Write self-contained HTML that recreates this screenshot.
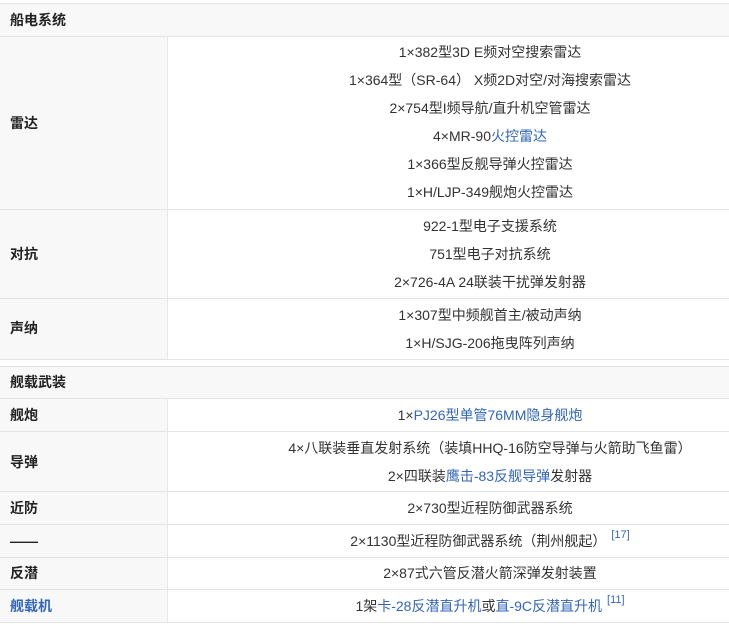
<!DOCTYPE html>
<html><head><meta charset="utf-8"><style>
*{margin:0;padding:0;box-sizing:border-box}
body{width:729px;height:628px;background:#fff;position:relative;overflow:hidden;font-family:"Liberation Sans","Noto Sans CJK SC",sans-serif;font-size:14px;color:#333}
.h{position:absolute;left:0;width:729px;height:1px;background:#e4e4e4}
.v{position:absolute;left:167px;width:1px;background:#e8e8e8}
.g{position:absolute;left:0;background:#f8f8f8}
.lb{position:absolute;left:10px;font-weight:bold;font-size:14px;color:#222;line-height:20px}
.t{position:absolute;left:168px;width:644px;text-align:center;line-height:20px;white-space:nowrap}
a{color:#3366bb;text-decoration:none}
.s{display:inline-block;font-size:11px;line-height:10px;color:#3366bb;vertical-align:baseline;position:relative;top:-8px;margin-left:5px}
</style></head><body>
<div class="g" style="top:3px;width:729px;height:33px"></div>
<div class="g" style="top:36px;width:167px;height:323px"></div>
<div class="g" style="top:366px;width:729px;height:32px"></div>
<div class="g" style="top:398px;width:167px;height:224px"></div>
<div class="h" style="top:3px"></div>
<div class="h" style="top:36px"></div>
<div class="h" style="top:209px"></div>
<div class="h" style="top:298px"></div>
<div class="h" style="top:359px"></div>
<div class="h" style="top:366px"></div>
<div class="h" style="top:398px"></div>
<div class="h" style="top:431px"></div>
<div class="h" style="top:491px"></div>
<div class="h" style="top:524px"></div>
<div class="h" style="top:557px"></div>
<div class="h" style="top:589px"></div>
<div class="h" style="top:622px"></div>
<div class="v" style="top:36px;height:323px"></div>
<div class="v" style="top:398px;height:224px"></div>

<div class="lb" style="top:10px">船电系统</div>
<div class="lb" style="top:113px">雷达</div>
<div class="lb" style="top:244px">对抗</div>
<div class="lb" style="top:318px">声纳</div>
<div class="lb" style="top:372px">舰载武装</div>
<div class="lb" style="top:405px">舰炮</div>
<div class="lb" style="top:452px">导弹</div>
<div class="lb" style="top:498px">近防</div>
<div class="lb" style="top:531px">——</div>
<div class="lb" style="top:563px">反潜</div>
<div class="lb" style="top:596px;color:#3366bb">舰载机</div>

<div class="t" style="top:42px">1×382型3D E频对空搜索雷达</div>
<div class="t" style="top:70px">1×364型（SR-64） X频2D对空/对海搜索雷达</div>
<div class="t" style="top:98px">2×754型I频导航/直升机空管雷达</div>
<div class="t" style="top:126px">4×MR-90<a>火控雷达</a></div>
<div class="t" style="top:154px">1×366型反舰导弹火控雷达</div>
<div class="t" style="top:182px">1×H/LJP-349舰炮火控雷达</div>
<div class="t" style="top:216px">922-1型电子支援系统</div>
<div class="t" style="top:244px">751型电子对抗系统</div>
<div class="t" style="top:272px">2×726-4A 24联装干扰弹发射器</div>
<div class="t" style="top:305px">1×307型中频舰首主/被动声纳</div>
<div class="t" style="top:333px">1×H/SJG-206拖曳阵列声纳</div>
<div class="t" style="top:405px">1×<a>PJ26型单管76MM隐身舰炮</a></div>
<div class="t" style="top:438px">4×八联装垂直发射系统（装填HHQ-16防空导弹与火箭助飞鱼雷）</div>
<div class="t" style="top:466px">2×四联装<a>鹰击-83反舰导弹</a>发射器</div>
<div class="t" style="top:498px">2×730型近程防御武器系统</div>
<div class="t" style="top:531px">2×1130型近程防御武器系统（荆州舰起）<span class="s">[17]</span></div>
<div class="t" style="top:563px">2×87式六管反潜火箭深弹发射装置</div>
<div class="t" style="top:596px">1架<a>卡-28反潜直升机</a>或<a>直-9C反潜直升机</a><span class="s">[11]</span></div>
</body></html>
